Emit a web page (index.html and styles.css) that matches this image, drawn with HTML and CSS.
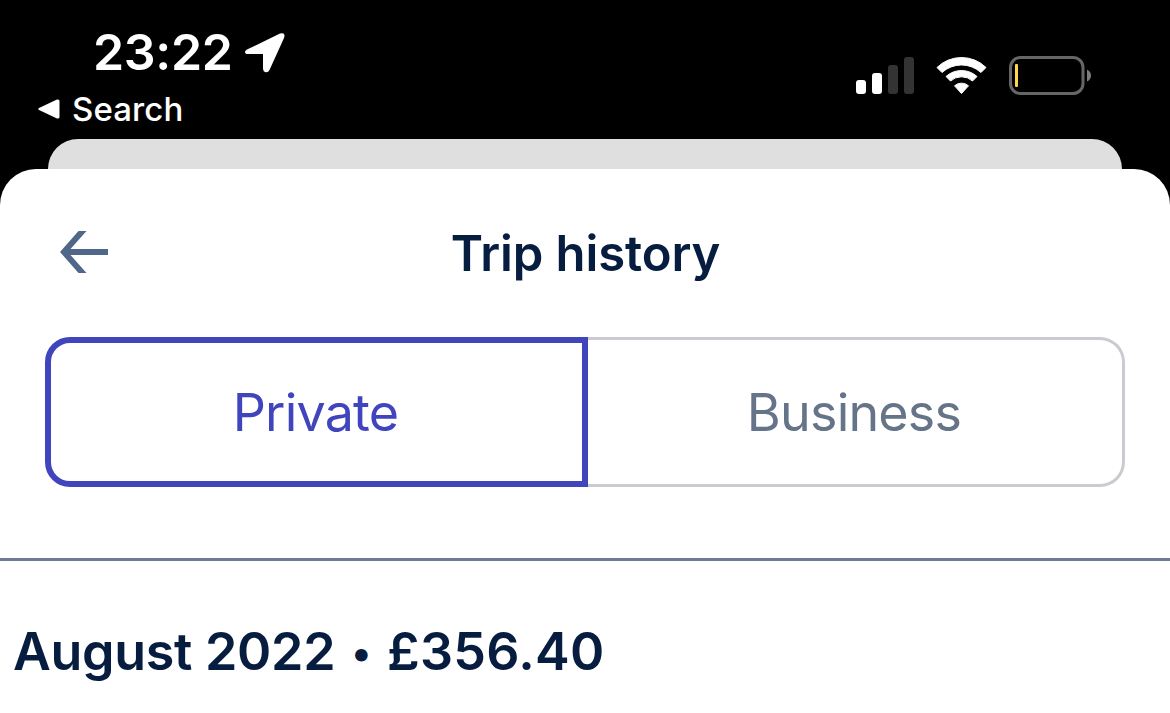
FILE: index.html
```html
<!DOCTYPE html>
<html lang="en">
<head>
    <meta charset="UTF-8">
    <meta name="viewport" content="width=device-width, initial-scale=1.0">
    <title>Trip history</title>
    <link rel="stylesheet" href="styles.css">
</head>
<body>
    <header class="status-bar">
        <div class="status-left">
            <div class="clock">
                <span class="time">23:22</span>
                <svg width="41" height="41" viewBox="0 0 41 41">
                    <path d="M3 17.5L36 1.6Q42 0 40 6L25.500 38Q24 41 21 40Q19 39 19 36.500V22H4Q1 22 1 20Q1 18.500 3 17.500Z" fill="#fff"/>
                </svg>
            </div>
            <a class="back-app" href="#">
                <svg width="22" height="20" viewBox="0 0 22 20">
                    <path d="M1 9L19 .5Q21.500 0 21.500 2V18Q21.500 20 19 19.500L1 11Q-.5 10 1 9Z" fill="#fff"/>
                </svg>
                <span>Search</span>
            </a>
        </div>
        <div class="status-right">
            <svg width="59" height="38" viewBox="0 0 59 38">
                <rect x="0" y="24" width="10" height="14" rx="3" fill="#fff"/>
                <rect x="16" y="17" width="10" height="21" rx="3" fill="#fff"/>
                <rect x="32" y="9" width="10" height="29" rx="3" fill="#333"/>
                <rect x="48" y="1" width="10" height="37" rx="3" fill="#333"/>
            </svg>
            <svg class="wifi" width="52" height="39" viewBox="0 0 52 39">
                <g fill="#fff" stroke="#fff" stroke-linejoin="round">
                    <path d="M1 11.500A35 35 0 0 1 50 11.500L45 16.500A29 29 0 0 0 6 16.500Z"/>
                    <path d="M10 20.500A23 23 0 0 1 41 20.500L36.500 25A16.500 16.500 0 0 0 14.500 25Z"/>
                    <path d="M18.500 29.800A10.500 10.500 0 0 1 32.500 29.800L25.500 37.500Z"/>
                </g>
            </svg>
            <svg width="82" height="39" viewBox="0 0 82 39">
                <rect x="1.500" y="1.500" width="72.500" height="36" rx="10" fill="none" stroke="#666" stroke-width="3"/>
                <rect x="6" y="8" width="3" height="23" rx="1" fill="#ffd64a"/>
                <path d="M78 13.500Q82 15.500 82 19.500T78 25.500Z" fill="#7c7c7c"/>
            </svg>
        </div>
    </header>
    <div class="sheet-behind"></div>
    <main class="sheet">
        <div class="nav">
            <a href="#" aria-label="Back">
                <svg width="48" height="42" viewBox="0 0 48 42">
                    <path d="M18.500 0H26.500L10.500 18H48V24H10.500L26.500 42H18.500L0 21Z" fill="#51678a"/>
                </svg>
            </a>
            <h1>Trip history</h1>
        </div>
        <div class="tabs">
            <button type="button" class="tab active">Private</button>
            <button type="button" class="tab">Business</button>
        </div>
        <section class="month">
            <h2>August 2022 <span class="dot">•</span> <span class="amount">£356.40</span></h2>
        </section>
    </main>
</body>
</html>
```

FILE: styles.css
```css
* {
    box-sizing: border-box;
}
body {
    margin: 0;
    height: 713px;
    overflow: hidden;
    background-color: #000;
    font-family: Inter, sans-serif;
    color: #071d40;
}
a {
    color: inherit;
    text-decoration: none;
}
svg {
    display: block;
}
.status-bar {
    height: 139px;
    display: flex;
    justify-content: space-between;
    color: #fff;
}
.status-left {
    padding: 22px 0 0 38px;
}
.clock {
    display: flex;
    align-items: center;
    height: 60px;
    padding-left: 55px;
    gap: 11px;
}
.time {
    font-size: 50px;
    font-weight: 600;
    letter-spacing: -0.3px;
}
.back-app {
    display: flex;
    align-items: center;
    height: 54px;
    gap: 12px;
    font-size: 33px;
    font-weight: 450;
    letter-spacing: 0.1px;
}
.status-right {
    display: flex;
    align-items: flex-start;
    padding: 56px 79px 0 0;
}
.wifi {
    margin: 0 21px;
}
.sheet-behind {
    height: 30px;
    margin: 0 48px;
    background-color: #dfdfdf;
    border-radius: 30px 30px 0 0;
}
.sheet {
    height: 544px;
    background-color: #fff;
    border-radius: 36px 36px 0 0;
}
.nav {
    height: 168px;
    display: grid;
    grid-template-columns: 1fr auto 1fr;
    align-items: center;
    padding: 0 59px 2px 60px;
}
h1 {
    margin: 0;
    padding-top: 2px;
    font-size: 49px;
    font-weight: 600;
    letter-spacing: -0.1px;
}
.tabs {
    display: grid;
    grid-template-columns: 543px 1fr;
    height: 150px;
    margin: 0 45px;
}
.tab {
    padding: 0 2px 0 0;
    background-color: #fff;
    border: 3px solid #c9cbd0;
    border-left: none;
    border-radius: 0 25px 25px 0;
    color: #667489;
    font-family: inherit;
    font-size: 52px;
    letter-spacing: -0.8px;
}
.tab.active {
    border: 6px solid #4045bd;
    border-radius: 25px 0 0 25px;
    color: #4045bd;
}
.month {
    margin-top: 71px;
    border-top: 3px solid #6f7b98;
    padding: 59px 13px 0;
}
h2 {
    margin: 0;
    font-size: 52px;
    font-weight: 600;
    line-height: 64px;
    letter-spacing: -0.3px;
    white-space: nowrap;
}
.dot {
    display: inline-block;
    width: 26px;
    font-size: 40px;
    line-height: 1;
    text-align: center;
    vertical-align: 3px;
}
.amount {
    letter-spacing: 0.3px;
}
```
